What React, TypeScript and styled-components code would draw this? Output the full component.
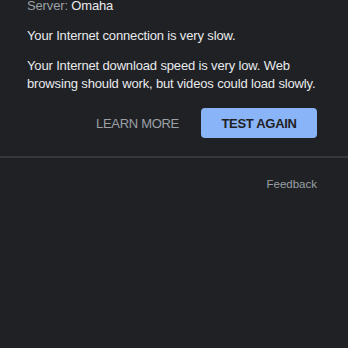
import React from "react";
import styled, { createGlobalStyle } from "styled-components";

const Global = createGlobalStyle`
  html, body { margin: 0; padding: 0; background: #202124; }
  body { font-family: "Liberation Sans", Arial, sans-serif; overflow: hidden; }
`;

const Page = styled.div`
  width: 348px;
  height: 348px;
  background: #202124;
  color: #e8eaed;
  overflow: hidden;
`;

const Result = styled.section`
  padding: 0 24px 18px 27px;
  margin-top: -3px;
  display: flex;
  flex-direction: column;
`;

const Server = styled.div`
  font-size: 13px;
  letter-spacing: -0.15px;
  line-height: 18px;
  color: #e8eaed;
`;

const Label = styled.span`
  color: #9aa0a6;
`;

const Para = styled.p<{ $top: number }>`
  margin: ${(p) => p.$top}px 0 0;
  font-size: 13px;
  letter-spacing: -0.15px;
  line-height: 18px;
  color: #e8eaed;
`;

const Actions = styled.div`
  display: flex;
  justify-content: flex-end;
  align-items: center;
  gap: 22px;
  margin-top: 15px;
  padding-right: 7px;
`;

const TextButton = styled.button`
  background: none;
  border: none;
  padding: 0;
  font-family: inherit;
  font-size: 13px;
  font-weight: 500;
  color: #9aa0a6;
  letter-spacing: -0.3px;
`;

const FilledButton = styled.button`
  width: 116px;
  height: 30px;
  border: none;
  border-radius: 4px;
  background: #8ab4f8;
  color: #202124;
  font-family: inherit;
  font-size: 13px;
  font-weight: 700;
  letter-spacing: -0.3px;
`;

const Divider = styled.hr`
  margin: 0;
  border: none;
  border-top: 2px solid #35363a;
`;

const Footer = styled.div`
  display: flex;
  justify-content: flex-end;
  padding: 20px 31px 0 0;
`;

const Feedback = styled.a`
  font-size: 11.5px;
  color: #9aa0a6;
  text-decoration: none;
`;

export default function App() {
  return (
    <Page>
      <Global />
      <Result>
        <Server>
          <Label>Server:</Label> Omaha
        </Server>
        <Para $top={12}>Your Internet connection is very slow.</Para>
        <Para $top={12}>
          Your Internet download speed is very low. Web browsing should work, but videos could load slowly.
        </Para>
        <Actions>
          <TextButton>LEARN MORE</TextButton>
          <FilledButton>TEST AGAIN</FilledButton>
        </Actions>
      </Result>
      <Divider />
      <Footer>
        <Feedback href="#">Feedback</Feedback>
      </Footer>
    </Page>
  );
}
